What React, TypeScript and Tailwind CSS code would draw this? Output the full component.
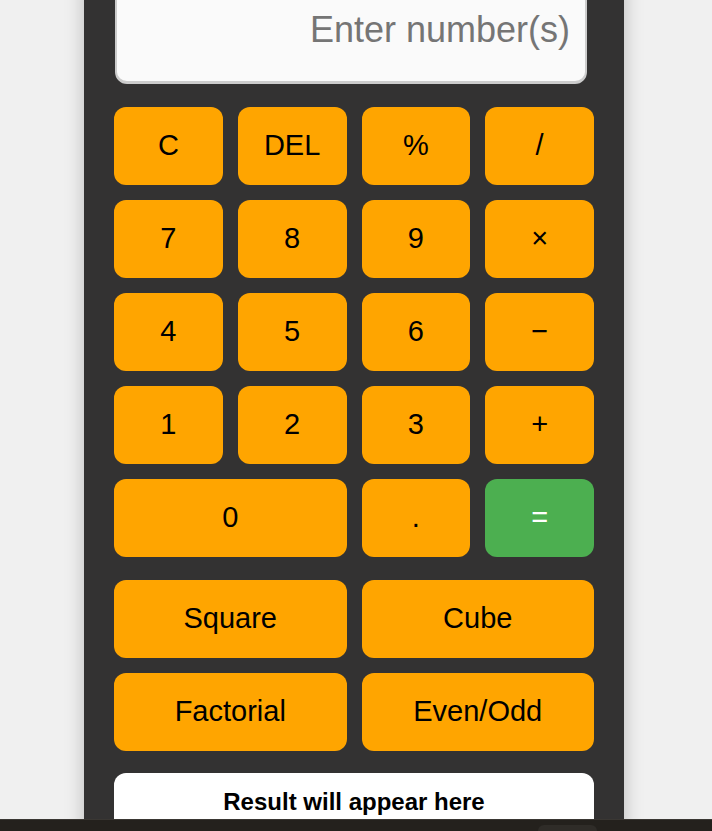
const keys: { label: string; wide?: boolean; green?: boolean }[] = [
  { label: 'C' },
  { label: 'DEL' },
  { label: '%' },
  { label: '/' },
  { label: '7' },
  { label: '8' },
  { label: '9' },
  { label: '×' },
  { label: '4' },
  { label: '5' },
  { label: '6' },
  { label: '−' },
  { label: '1' },
  { label: '2' },
  { label: '3' },
  { label: '+' },
  { label: '0', wide: true },
  { label: '.' },
  { label: '=', green: true },
];

const extras = ['Square', 'Cube', 'Factorial', 'Even/Odd'];

export default function App() {
  return (
    <div
      className="min-h-[831px] bg-[#f0f0f0] overflow-hidden"
      style={{ fontFamily: '"Liberation Sans", Arial, sans-serif' }}
    >
      <div className="ml-[84px] w-[540px] bg-[#333232] px-[30px] pb-[40px] shadow-[0_0_18px_rgba(0,0,0,0.22)]">
        {/* Display */}
        <div className="ml-px -mt-[20px] h-[104px] w-[472px] rounded-[12px] border-2 border-b-[3px] border-[#cccccc] bg-[#fafafa] px-[15px] pt-[27px] text-right text-[36px] leading-[41px] text-[#757575]">
          Enter number(s)
        </div>

        {/* Keypad */}
        <div className="mt-[23px] grid grid-cols-4 gap-[15px]">
          {keys.map((k) => (
            <button
              key={k.label}
              className={`h-[78px] rounded-[12px] text-[29px] ${
                k.wide ? 'col-span-2' : ''
              } ${k.green ? 'bg-[#4caf50] text-white' : 'bg-[#ffa500] text-black'}`}
            >
              {k.label}
            </button>
          ))}
        </div>

        {/* Extra functions */}
        <div className="mt-[23px] grid grid-cols-2 gap-[15px]">
          {extras.map((e) => (
            <button
              key={e}
              className="h-[78px] rounded-[12px] bg-[#ffa500] text-[29px] text-black"
            >
              {e}
            </button>
          ))}
        </div>

        {/* Result */}
        <div className="mt-[22px] h-[90px] rounded-[12px] bg-white pt-[15px] text-center text-[24px] font-bold leading-[28px] text-black">
          Result will appear here
        </div>
      </div>

      {/* bottom system bar */}
      <div className="fixed bottom-0 left-0 right-0 h-[12px] border-t border-[#3a3733] bg-[#24211d]">
        <div className="absolute left-[538px] top-[5px] h-[12px] w-[59px] rounded-t-[6px] bg-[#2f2c28]" />
      </div>
    </div>
  );
}
